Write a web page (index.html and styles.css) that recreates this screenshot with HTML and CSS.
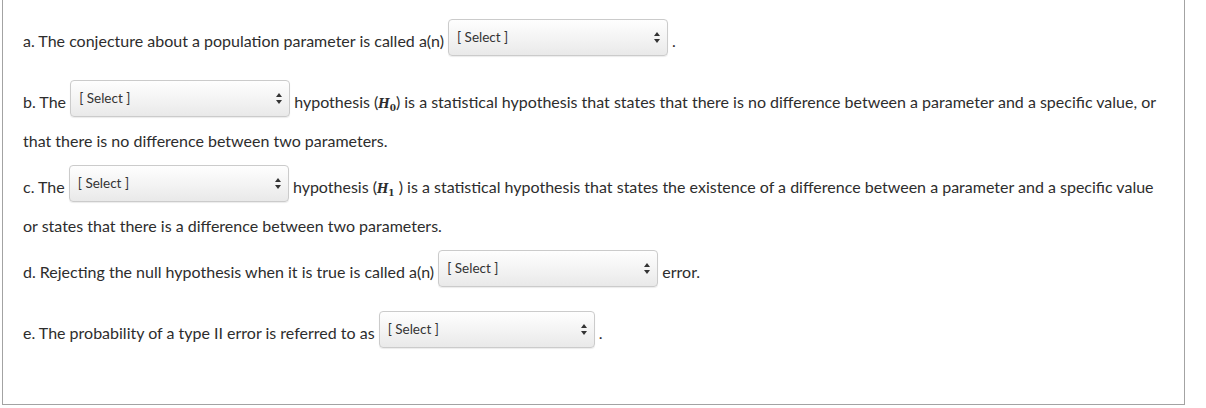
FILE: index.html
```html
<!DOCTYPE html>
<html lang="en">
<head>
<meta charset="utf-8">
<title>Hypothesis testing</title>
<link rel="stylesheet" href="styles.css">
</head>
<body>
<div class="quiz">
  <p class="q">a. The conjecture about a population parameter is called a(n) <span class="sel" role="combobox"><span class="sel-inner"><span class="sel-text">[ Select ]</span><svg class="arrows" width="6" height="11" viewBox="0 0 6 11"><path d="M3 0 L6 4 L0 4 Z M0 7 L6 7 L3 11 Z" fill="#333"/></svg></span></span> .</p>
  <p class="q">b. The <span class="sel" role="combobox"><span class="sel-inner"><span class="sel-text">[ Select ]</span><svg class="arrows" width="6" height="11" viewBox="0 0 6 11"><path d="M3 0 L6 4 L0 4 Z M0 7 L6 7 L3 11 Z" fill="#333"/></svg></span></span> hypothesis (<span class="math">H<sub>0</sub></span>) is a statistical hypothesis that states that there is no difference between a parameter and a specific value, or that there is no difference between two parameters.</p>
  <p class="q">c. The <span class="sel" role="combobox"><span class="sel-inner"><span class="sel-text">[ Select ]</span><svg class="arrows" width="6" height="11" viewBox="0 0 6 11"><path d="M3 0 L6 4 L0 4 Z M0 7 L6 7 L3 11 Z" fill="#333"/></svg></span></span> hypothesis (<span class="math">H<sub>1</sub></span> ) is a statistical hypothesis that states the existence of a difference between a parameter and a specific value or states that there is a difference between two parameters.</p>
  <p class="q">d. Rejecting the null hypothesis when it is true is called a(n) <span class="sel" role="combobox"><span class="sel-inner"><span class="sel-text">[ Select ]</span><svg class="arrows" width="6" height="11" viewBox="0 0 6 11"><path d="M3 0 L6 4 L0 4 Z M0 7 L6 7 L3 11 Z" fill="#333"/></svg></span></span> error.</p>
  <p class="q">e. The probability of a type II error is referred to as <span class="sel sel-e" role="combobox"><span class="sel-inner"><span class="sel-text">[ Select ]</span><svg class="arrows" width="6" height="11" viewBox="0 0 6 11"><path d="M3 0 L6 4 L0 4 Z M0 7 L6 7 L3 11 Z" fill="#333"/></svg></span></span> .</p>
</div>
</body>
</html>
```
FILE: styles.css
```css
html, body {
  margin: 0;
  padding: 0;
  background: #ffffff;
}

body {
  font-family: Lato, "Open Sans", sans-serif;
  font-size: 16px;
  color: #2d2d2d;
}

.quiz {
  box-sizing: border-box;
  margin-left: 2px;
  width: 1183px;
  height: 405px;
  border: 1px solid #a3a3a3;
  border-top: 0;
  padding: 19px 20px 0 20px;
}

.q {
  margin: 0 0 12px 0;
  line-height: 24px;
}

.sel {
  display: inline-block;
  box-sizing: border-box;
  width: 220px;
  height: 37px;
  margin-bottom: 12px;
  vertical-align: -21px;
  overflow: hidden;
  border: 1px solid #cbcbcb;
  border-radius: 4px;
  background: linear-gradient(to bottom, #fefefe 0%, #f4f4f4 50%, #e9e9e9 100%);
  box-shadow: 0 1px 1px rgba(0, 0, 0, 0.08);
  font-size: 13.5px;
  line-height: 16px;
  color: #333333;
}

.sel-inner {
  display: flex;
  align-items: center;
  justify-content: space-between;
  height: 100%;
  box-sizing: border-box;
  padding: 0 7px 1px 8px;
}

.sel-e {
  width: 216px;
}

.arrows {
  display: block;
  flex: none;
}

.math {
  font-family: "DejaVu Serif", "Liberation Serif", serif;
  font-weight: bold;
  font-style: italic;
  font-size: 12px;
}

.math sub {
  font-size: 9px;
  font-style: normal;
  vertical-align: -3px;
  line-height: 0;
}
```
